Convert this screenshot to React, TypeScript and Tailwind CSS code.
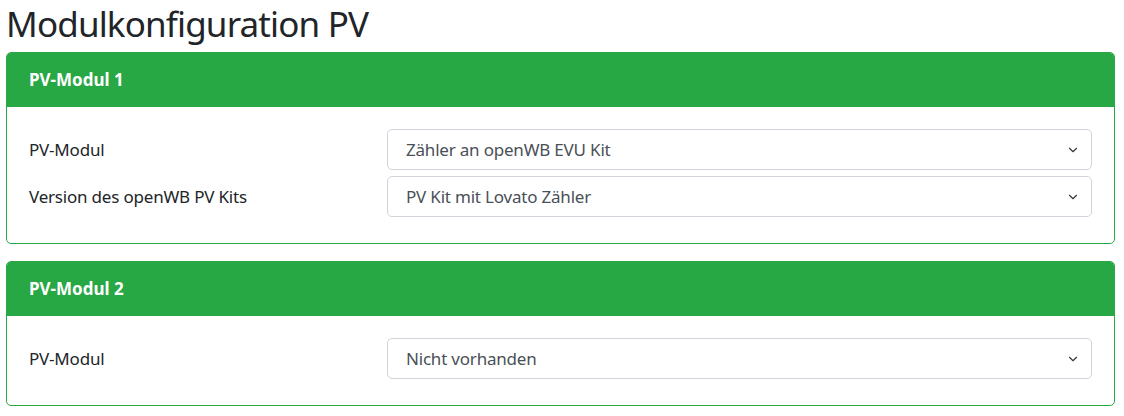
import { ChevronDown } from "lucide-react"

const CARDS = [
  {
    id: 1,
    title: "PV-Modul 1",
    rows: [
      { id: 1, label: "PV-Modul", value: "Zähler an openWB EVU Kit" },
      { id: 2, label: "Version des openWB PV Kits", value: "PV Kit mit Lovato Zähler" },
    ],
  },
  {
    id: 2,
    title: "PV-Modul 2",
    rows: [{ id: 1, label: "PV-Modul", value: "Nicht vorhanden" }],
  },
]

function SelectRow({ label, value }: { label: string; value: string }) {
  return (
    <div className="flex items-center">
      <label className="w-[358px] shrink-0 tracking-[-0.2px] text-[#212529]">{label}</label>
      <div className="relative flex-1">
        <select
          defaultValue={value}
          className="h-[41px] w-full appearance-none rounded-[5px] border border-[#ced4da] bg-white pl-[18px] pr-10 tracking-[-0.2px] text-[#495057] outline-none"
        >
          <option>{value}</option>
        </select>
        <ChevronDown
          className="pointer-events-none absolute right-[12px] top-1/2 -translate-y-1/2 text-[#343a40]"
          size={14}
          strokeWidth={2}
        />
      </div>
    </div>
  )
}

export default function App() {
  return (
    <div className="min-h-screen bg-white px-[6px] pr-[9px] font-['Noto_Sans',sans-serif] text-[17px] text-[#212529]">
      <h1 className="pt-[3px] pb-[7px] text-[35px] leading-[42px] font-normal tracking-[-0.85px]">
        Modulkonfiguration PV
      </h1>
      <div className="flex flex-col gap-[17px]">
        {CARDS.map((card) => (
          <div key={card.id} className="overflow-hidden rounded-[5px] border border-[#28a745]">
            <div className="flex h-[54px] items-center bg-[#28a745] px-[22px] font-bold text-white">
              {card.title}
            </div>
            <div className="flex flex-col gap-[6px] px-[22px] pt-[22px] pb-[26px]">
              {card.rows.map((row) => (
                <SelectRow key={row.id} label={row.label} value={row.value} />
              ))}
            </div>
          </div>
        ))}
      </div>
    </div>
  )
}
